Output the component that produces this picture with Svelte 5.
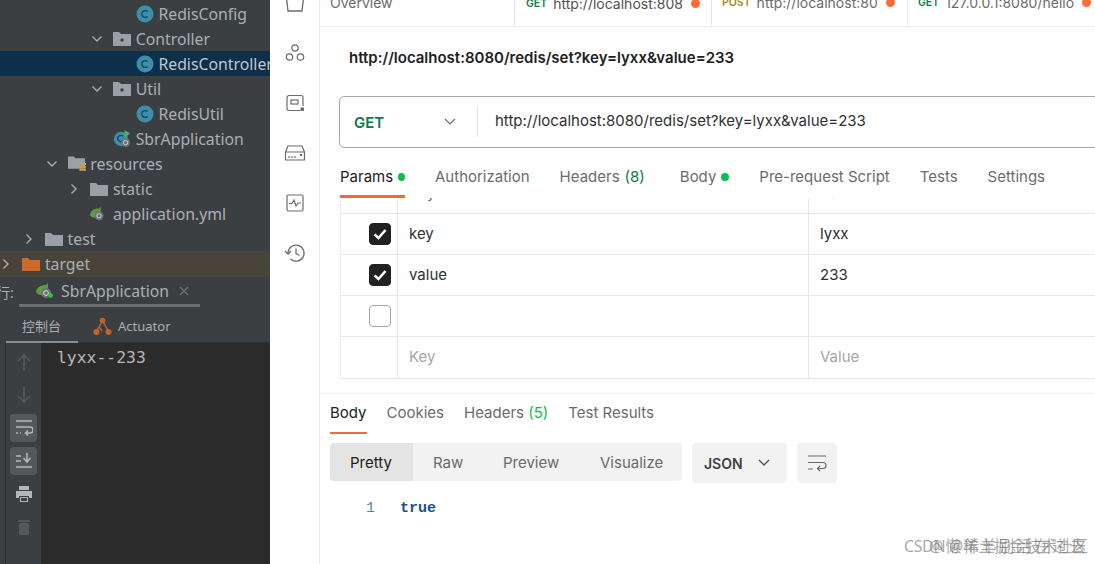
<script>
	const tree = [
		{ name: 'RedisConfig', depth: 4, icon: 'class' },
		{ name: 'Controller', depth: 3, icon: 'pkg', open: true },
		{ name: 'RedisController', depth: 4, icon: 'class', selected: true },
		{ name: 'Util', depth: 3, icon: 'pkg', open: true },
		{ name: 'RedisUtil', depth: 4, icon: 'class' },
		{ name: 'SbrApplication', depth: 3, icon: 'boot' },
		{ name: 'resources', depth: 1, icon: 'res', open: true },
		{ name: 'static', depth: 2, icon: 'folder', closed: true },
		{ name: 'application.yml', depth: 2, icon: 'yml' },
		{ name: 'test', depth: 0, icon: 'folder', closed: true },
		{ name: 'target', depth: -1, icon: 'target', closed: true, excluded: true }
	];

	const tabs = [
		{ method: 'GET', url: 'http://localhost:808', active: true, width: 197 },
		{ method: 'POST', url: 'http://localhost:80', width: 196 },
		{ method: 'GET', url: '127.0.0.1:8080/hello', width: 190 }
	];

	const requestTabs = [
		{ label: 'Params', dot: true, active: true },
		{ label: 'Authorization' },
		{ label: 'Headers', count: 8 },
		{ label: 'Body', dot: true },
		{ label: 'Pre-request Script' },
		{ label: 'Tests' },
		{ label: 'Settings' }
	];

	const params = [
		{ key: 'key', value: 'lyxx', checked: true },
		{ key: 'value', value: '233', checked: true },
		{ key: '', value: '', checked: false }
	];

	const url = 'http://localhost:8080/redis/set?key=lyxx&value=233';
</script>

{#snippet leaf(x)}
	<path d="M{x} 10c1-5 5-7 10-7l2-2v4c0 5-3 8-7 8-2 0-4-1-5-3z" fill="#5e9a48" />
	<circle cx={x + 10} cy="11" r="5" fill="#6e7174" />
	<circle cx={x + 10} cy="11" r="2.4" fill="none" stroke="#d8d8d8" stroke-width="1" />
{/snippet}

<div class="page">
	<section class="ide">
		<div class="tree">
			{#each tree as row}
				<div class="row" class:selected={row.selected} class:excluded={row.excluded} style="padding-left: {row.depth * 22.7 + 23}px">
					<span class="arrow">
						{#if row.open}
							<svg width="12" height="12" viewBox="0 0 12 12"><path d="M1.5 3.5 6 8l4.500-4.500" fill="none" stroke="#a8adb0" stroke-width="1.4" /></svg>
						{:else if row.closed}
							<svg width="12" height="12" viewBox="0 0 12 12"><path d="M3.5 1.5 8 6l-4.500 4.500" fill="none" stroke="#a8adb0" stroke-width="1.4" /></svg>
						{/if}
					</span>
					<span class="ficon">
						{#if row.icon === 'class'}
							<svg width="18" height="18" viewBox="0 0 18 18">
								<circle cx="9" cy="9" r="8.5" fill="#3a8fb0" />
								<path d="M11.6 6.6a3.4 3.4 0 1 0 0 4.8" fill="none" stroke="#2b3e48" stroke-width="1.4" />
							</svg>
						{:else if row.icon === 'pkg'}
							<svg width="18" height="16" viewBox="0 0 18 16">
								<path d="M0 1h6l2 2h10v12H0z" fill="#9aa0a6" />
								<circle cx="9" cy="9" r="1.7" fill="#3c3f41" />
							</svg>
						{:else if row.icon === 'folder'}
							<svg width="18" height="16" viewBox="0 0 18 16"><path d="M0 2h6l2 2h10v11H0z" fill="#9aa0a6" /></svg>
						{:else if row.icon === 'target'}
							<svg width="18" height="16" viewBox="0 0 18 16"><path d="M0 2h6l2 2h10v11H0z" fill="#cc6a2c" /></svg>
						{:else if row.icon === 'res'}
							<svg width="19" height="18" viewBox="0 0 19 18">
								<path d="M0 1h6l2 2h10v11H0z" fill="#9aa0a6" />
								<path d="M12 8h7v2h-7zm0 3h7v2h-7zm0 3h7v2h-7z" fill="#c9a23a" />
							</svg>
						{:else if row.icon === 'boot'}
							<svg width="20" height="20" viewBox="0 0 20 20">
								<circle cx="9" cy="10" r="8" fill="#3a8fb0" />
								<path d="M11 7a3.4 3.4 0 1 0 0 5" fill="none" stroke="#2b3e48" stroke-width="1.4" />
								<path d="M13 0l6 4-6 4z" fill="#5fae4e" />
								<circle cx="14" cy="14" r="5" fill="#6e7174" />
								<circle cx="14" cy="14" r="2.4" fill="none" stroke="#d8d8d8" />
							</svg>
						{:else if row.icon === 'yml'}
							<svg width="20" height="18" viewBox="0 0 20 18">
								{@render leaf(0)}
							</svg>
						{/if}
					</span>
					<span class="fname">{row.name}</span>
				</div>
			{/each}
		</div>

		<div class="runbar">
			<span class="runlabel">行:</span>
			<div class="runtab">
				<svg width="20" height="18" viewBox="0 0 20 18">
					{@render leaf(0)}
					<circle cx="14.5" cy="13.5" r="2.4" fill="#27c93f" />
				</svg>
				<span>SbrApplication</span>
				<svg class="close" width="10" height="10" viewBox="0 0 10 10"><path d="M1 1l8 8M9 1l-8 8" stroke="#6d7073" stroke-width="1.2" /></svg>
			</div>
		</div>

		<div class="consoletabs">
			<span class="ctab active">控制台</span>
			<span class="ctab">
				<svg width="19" height="19" viewBox="0 0 19 19">
					<path d="M3 15 9.500 4 16 15M3 15l3-5 3 4" fill="none" stroke="#c4622d" stroke-width="1.4" />
					<circle cx="3.500" cy="15" r="3" fill="#c4622d" />
					<circle cx="15.500" cy="15" r="3" fill="#c4622d" />
					<circle cx="9.500" cy="3.500" r="2.800" fill="#c4622d" />
				</svg>
				Actuator
			</span>
		</div>

		<div class="consolebody">
			<div class="tools">
				<span class="tool dim">
					<svg width="16" height="18" viewBox="0 0 16 18"><path d="M8 17V2M2 8l6-6 6 6" fill="none" stroke="#55585b" stroke-width="1.6" /></svg>
				</span>
				<span class="tool dim">
					<svg width="16" height="18" viewBox="0 0 16 18"><path d="M8 1v15M2 10l6 6 6-6" fill="none" stroke="#55585b" stroke-width="1.6" /></svg>
				</span>
				<span class="tool on">
					<svg width="18" height="18" viewBox="0 0 18 18"><path d="M1 2h16M1 8h14a2.500 2.500 0 0 1 0 6h-4M13 11.500 10.500 14l2.500 2.500M1 14h2M5 14h1" fill="none" stroke="#b3b6b8" stroke-width="1.6" /></svg>
				</span>
				<span class="tool on">
					<svg width="18" height="18" viewBox="0 0 18 18"><path d="M12 1v8M8.500 6 12 10l3.500-4M1 4h5M1 9h5M1 15h16" fill="none" stroke="#b3b6b8" stroke-width="1.6" /></svg>
				</span>
				<span class="tool">
					<svg width="18" height="18" viewBox="0 0 18 18"><path d="M4 1h10v4H4zM1 6h16v7h-3v-2H4v2H1zM5 12h8v5H5z" fill="#b3b6b8" /><path d="M6 13h6v3H6z" fill="#3c3f41" /></svg>
				</span>
				<span class="tool">
					<svg width="14" height="18" viewBox="0 0 14 18"><path d="M1 2h12v2H1zM2 5h10v12H2z" fill="#55585b" /></svg>
				</span>
			</div>
			<pre class="output">lyxx--233</pre>
		</div>
	</section>

	<aside class="rail">
		<svg class="railtop" width="20" height="20" viewBox="0 0 20 20"><path d="M1 1h18l-2 17H3z" fill="none" stroke="#6b6b6b" stroke-width="1.300" /></svg>
		<svg width="20" height="20" viewBox="0 0 20 20" fill="none" stroke="#6b6b6b" stroke-width="1.200">
			<circle cx="10" cy="5" r="3.200" /><circle cx="4.500" cy="14" r="3.200" /><circle cx="15.500" cy="14" r="3.200" />
		</svg>
		<svg width="20" height="20" viewBox="0 0 20 20" fill="none" stroke="#6b6b6b" stroke-width="1.200">
			<path d="M15 17.500H4a2 2 0 0 1-2-2v-11a2 2 0 0 1 2-2h12a2 2 0 0 1 2 2V13" />
			<rect x="6" y="7" width="7" height="4" />
			<rect x="15.500" y="14.500" width="3.500" height="3.500" fill="#6b6b6b" stroke="none" />
		</svg>
		<svg width="22" height="20" viewBox="0 0 22 20" fill="none" stroke="#6b6b6b" stroke-width="1.200">
			<path d="M1.500 9 4 3h14l2.500 6v8h-19zM1.500 9h19" />
			<path d="M5 13v2M8 13v2M11 13v2" /><circle cx="17" cy="12" r=".6" />
		</svg>
		<svg width="20" height="20" viewBox="0 0 20 20" fill="none" stroke="#6b6b6b" stroke-width="1.200">
			<rect x="2" y="2" width="16" height="16" rx="1.500" />
			<path d="M4 10.500h3l2-3.500 2 6 2-3h3" />
		</svg>
		<svg width="22" height="20" viewBox="0 0 22 20" fill="none" stroke="#6b6b6b" stroke-width="1.300">
			<path d="M4 10a8 8 0 1 1 2.500 6" />
			<path d="M1 8l3 3 3-3M12 5.500V10.500l3.500 2" />
		</svg>
	</aside>

	<main class="postman">
		<div class="tabbar">
			<div class="tab overview"><span class="tabtext">Overview</span></div>
			{#each tabs as tab}
				<div class="tab" class:active={tab.active} style="width: {tab.width}px">
					<span class="method" class:post={tab.method === 'POST'}>{tab.method}</span>
					<span class="tabtext">{tab.url}</span>
					<span class="unsaved"></span>
				</div>
			{/each}
		</div>

		<h1 class="title">{url}</h1>

		<div class="urlbar">
			<div class="verb">
				<span>GET</span>
				<svg width="12" height="8" viewBox="0 0 12 8"><path d="M1 1l5 5 5-5" fill="none" stroke="#6b6b6b" stroke-width="1.200" /></svg>
			</div>
			<div class="urltext">{url}</div>
		</div>

		<nav class="reqtabs">
			{#each requestTabs as tab}
				<span class="reqtab" class:active={tab.active}>
					{tab.label}
					{#if tab.count}<em>({tab.count})</em>{/if}
					{#if tab.dot}<i></i>{/if}
				</span>
			{/each}
		</nav>

		<div class="table">
			<div class="trow clipped">
				<div class="c1"></div>
				<div class="c2"><span class="ghost">Key</span></div>
				<div class="c3"><span class="ghost">Value</span></div>
			</div>
			{#each params as p}
				<div class="trow">
					<div class="c1">
						<span class="check" class:checked={p.checked}>
							{#if p.checked}
								<svg width="14" height="12" viewBox="0 0 14 12"><path d="M1.500 6.500 5.500 10l7-8" fill="none" stroke="#fff" stroke-width="2.600" /></svg>
							{/if}
						</span>
					</div>
					<div class="c2">{p.key}</div>
					<div class="c3">{p.value}</div>
				</div>
			{/each}
			<div class="trow">
				<div class="c1"></div>
				<div class="c2 ph">Key</div>
				<div class="c3 ph">Value</div>
			</div>
		</div>

		<div class="response">
			<nav class="restabs">
				<span class="restab active">Body</span>
				<span class="restab">Cookies</span>
				<span class="restab">Headers <em>(5)</em></span>
				<span class="restab">Test Results</span>
			</nav>

			<div class="viewbar">
				<div class="segments">
					<span class="seg active">Pretty</span>
					<span class="seg raw">Raw</span>
					<span class="seg preview">Preview</span>
					<span class="seg visualize">Visualize</span>
				</div>
				<div class="format">
					<span>JSON</span>
					<svg width="12" height="8" viewBox="0 0 12 8"><path d="M1 1l5 5 5-5" fill="none" stroke="#505050" stroke-width="1.300" /></svg>
				</div>
				<div class="wrap">
					<svg width="20" height="18" viewBox="0 0 20 18" fill="none" stroke="#6b6b6b" stroke-width="1.200">
						<path d="M1 2h18M1 8.500h15a3 3 0 0 1 0 6h-5M13 12l-2.500 2.500L13 17M1 15h5" />
					</svg>
				</div>
			</div>

			<div class="code">
				<span class="lineno">1</span>
				<span class="bool">true</span>
			</div>
		</div>
	</main>

	<div class="watermark">
		<span class="wm1">CSDN @稀土掘金技术社区</span>
		<span class="wm2">@懒羊羊别活在过去</span>
	</div>
</div>

<style>
	:global(body) {
		margin: 0;
		background: #fff;
	}

	.page {
		position: relative;
		display: flex;
		width: 1095px;
		height: 564px;
		overflow: hidden;
		font-family: Inter, 'Liberation Sans', sans-serif;
	}

	/* ide side */
	.ide {
		width: 270px;
		flex: none;
		display: flex;
		flex-direction: column;
		background: #3c3f41;
		font-family: 'Noto Sans', 'Noto Sans CJK SC', sans-serif;
		color: #a9b0b5;
	}

	.tree {
		padding-top: 1px;
		height: 277px;
		box-sizing: border-box;
		flex: none;
		overflow: hidden;
	}

	.row {
		display: flex;
		align-items: center;
		height: 25px;
		font-size: 15.8px;
		white-space: nowrap;
		overflow: hidden;
		box-sizing: border-box;
	}

	.row.selected {
		background: #0d2f4a;
		color: #c0c6ca;
	}

	.row.excluded {
		background: #48443a;
		height: 26px;
	}

	.arrow {
		width: 12px;
		height: 12px;
		margin-right: 10px;
		flex: none;
		display: flex;
	}

	.ficon {
		width: 18px;
		flex: none;
		margin-right: 4.6px;
		display: flex;
		align-items: center;
	}

	.runbar {
		height: 30px;
		flex: none;
		display: flex;
		align-items: center;
		background: #3c3f41;
		font-size: 15.8px;
	}

	.runlabel {
		margin-left: -4px;
		width: 23px;
		font-size: 14px;
	}

	.runtab {
		display: flex;
		align-items: center;
		gap: 5px;
		width: 181px;
		height: 30px;
		box-sizing: border-box;
		padding-left: 17px;
		border-bottom: 3px solid #6c6f72;
		flex: none;
	}

	.close {
		margin-left: 5px;
	}

	.consoletabs {
		height: 36px;
		box-sizing: border-box;
		flex: none;
		display: flex;
		align-items: center;
		margin-left: 6px;
		border-bottom: 1px solid #323232;
		font-size: 13px;
	}

	.ctab {
		display: flex;
		align-items: center;
		gap: 6px;
		height: 36px;
		box-sizing: border-box;
		padding-top: 3px;
	}

	.ctab.active {
		width: 72px;
		padding-left: 16px;
		border-bottom: 2px solid #8a8d90;
		margin-right: 15px;
	}

	.consolebody {
		flex: 1;
		display: flex;
		margin-left: 5px;
		border-left: 1px solid #2d2d2d;
		min-height: 0;
	}

	.tools {
		width: 35px;
		flex: none;
		display: flex;
		flex-direction: column;
		align-items: center;
		gap: 5px;
		padding-top: 5px;
		box-sizing: border-box;
	}

	.tool {
		width: 27px;
		height: 28px;
		border-radius: 4px;
		display: flex;
		align-items: center;
		justify-content: center;
	}

	.tool.on {
		background: #55585b;
	}

	.output {
		flex: 1;
		margin: 0;
		padding: 5px 0 0 16px;
		background: #2b2b2b;
		color: #b4b8ba;
		font-family: 'DejaVu Sans Mono', monospace;
		font-size: 16.4px;
		line-height: 20px;
	}

	/* postman rail */
	.rail {
		width: 50px;
		flex: none;
		box-sizing: border-box;
		border-right: 1px solid #ededed;
		display: flex;
		flex-direction: column;
		align-items: center;
		gap: 30px;
		margin-top: -7px;
	}

	/* postman main */
	.postman {
		flex: 1;
		min-width: 0;
		display: flex;
		flex-direction: column;
		color: #212121;
		overflow: hidden;
	}

	.tabbar {
		height: 27px;
		flex: none;
		display: flex;
		align-items: flex-end;
		overflow: hidden;
		border-bottom: 1px solid #ededed;
		box-sizing: border-box;
		font-size: 14px;
	}

	.tab {
		height: 26px;
		flex: none;
		display: flex;
		align-items: flex-end;
		gap: 6px;
		box-sizing: border-box;
		padding: 0 0 16px 10px;
		line-height: 17px;
		border-right: 1px solid #ededed;
		color: #6b6b6b;
		white-space: nowrap;
	}

	.tab.overview {
		width: 195px;
		border-right: 1px solid #e4e4e4;
	}

	.tab.active {
		height: 27px;
		margin-bottom: -1px;
		background: #fff;
		color: #505050;
		position: relative;
		border-right: 1px solid #e4e4e4;
		padding-left: 11px;
	}

	.tabtext {
		position: relative;
		top: 1px;
	}

	.method {
		position: relative;
		top: 1px;
		font-size: 10.5px;
		font-weight: 600;
		color: #0b7a47;
	}

	.method.post {
		color: #a8891a;
	}

	.unsaved {
		position: relative;
		top: -3px;
		width: 9px;
		height: 9px;
		border-radius: 50%;
		background: #ff6c37;
		margin-left: 2px;
	}

	.title {
		margin: 0;
		padding: 22px 0 0 29px;
		height: 69px;
		box-sizing: border-box;
		font-size: 15px;
		font-weight: 600;
		line-height: 18px;
		color: #212121;
		white-space: nowrap;
		flex: none;
	}

	.urlbar {
		margin-left: 19px;
		width: 800px;
		height: 52px;
		box-sizing: border-box;
		flex: none;
		border: 1px solid #a6a6a6;
		border-radius: 5px;
		display: flex;
		align-items: center;
	}

	.verb {
		width: 138px;
		height: 30px;
		box-sizing: border-box;
		padding: 0 21px 0 14px;
		display: flex;
		align-items: center;
		justify-content: space-between;
		border-right: 1px solid #e4e4e4;
		font-size: 15px;
		font-weight: 600;
		color: #0b7a47;
		flex: none;
	}

	.urltext {
		padding: 0 0 4px 17px;
		font-size: 15px;
		color: #303030;
		white-space: nowrap;
	}

	.reqtabs {
		display: flex;
		flex: none;
		height: 50px;
		margin-left: 20px;
		box-sizing: border-box;
		padding-top: 20px;
		gap: 30px;
		font-size: 15px;
		color: #6b6b6b;
	}

	.reqtab {
		display: flex;
		align-items: flex-start;
		gap: 5px;
		height: 30px;
		line-height: 18px;
		box-sizing: border-box;
		white-space: nowrap;
	}

	.reqtab.active {
		color: #212121;
		border-bottom: 3px solid #f26b3a;
		width: 65px;
	}

	.reqtab em {
		font-style: normal;
		color: #0b7a47;
		margin-right: 5px;
	}

	.reqtab i {
		width: 8px;
		height: 8px;
		border-radius: 50%;
		background: #0cbb52;
		margin-top: 5px;
	}

	.table {
		margin-left: 20px;
		flex: none;
		width: 800px;
		border-bottom: 1px solid #e8e8e8;
		border-left: 1px solid #ededed;
		font-size: 15px;
		color: #303030;
	}

	.trow {
		display: flex;
		height: 41px;
		box-sizing: border-box;
		border-bottom: 1px solid #e8e8e8;
	}

	.trow:last-child {
		border-bottom: 0;
	}

	.trow.clipped {
		height: 16px;
		overflow: hidden;
	}

	.ghost {
		position: relative;
		top: -12px;
		color: #6b6b6b;
	}

	.c1 {
		width: 57px;
		flex: none;
		box-sizing: border-box;
		border-right: 1px solid #e8e8e8;
		display: flex;
		align-items: center;
		padding-left: 28px;
	}

	.c2 {
		width: 411px;
		flex: none;
		box-sizing: border-box;
		border-right: 1px solid #e8e8e8;
		padding: 0 11px 2px;
		display: flex;
		align-items: center;
	}

	.c3 {
		padding: 0 11px 2px;
		flex: 1;
		display: flex;
		align-items: center;
	}

	.ph {
		color: #a6a6a6;
	}

	.check {
		width: 22px;
		height: 22px;
		box-sizing: border-box;
		border-radius: 4px;
		border: 1px solid #a6a6a6;
		display: flex;
		align-items: center;
		justify-content: center;
	}

	.check.checked {
		background: #212121;
		border-color: #212121;
	}

	.response {
		margin-top: 14px;
		border-top: 1px solid #ededed;
		padding-left: 10px;
		flex: 1;
	}

	.restabs {
		display: flex;
		gap: 20px;
		height: 40px;
		box-sizing: border-box;
		padding-top: 10px;
		font-size: 15px;
		color: #6b6b6b;
	}

	.restab {
		height: 30px;
		line-height: 18px;
		box-sizing: border-box;
		white-space: nowrap;
	}

	.restab.active {
		color: #212121;
		border-bottom: 2px solid #f26b3a;
	}

	.restab em {
		font-style: normal;
		color: #0cbb52;
	}

	.viewbar {
		display: flex;
		align-items: flex-start;
		gap: 10px;
		margin-top: 9px;
	}

	.segments {
		display: flex;
		width: 352px;
		height: 38px;
		border-radius: 4px;
		background: #f2f2f2;
		font-size: 15px;
		color: #6b6b6b;
		overflow: hidden;
	}

	.seg {
		display: flex;
		align-items: center;
		box-sizing: border-box;
	}

	.seg.active {
		width: 83px;
		padding-left: 20px;
		background: #e4e4e4;
		color: #212121;
	}

	.seg.raw {
		width: 70px;
		padding-left: 20px;
	}

	.seg.preview {
		width: 97px;
		padding-left: 20px;
	}

	.seg.visualize {
		padding-left: 20px;
	}

	.format {
		width: 95px;
		height: 40px;
		box-sizing: border-box;
		padding: 0 17px 0 12px;
		border-radius: 4px;
		background: #f2f2f2;
		display: flex;
		align-items: center;
		justify-content: space-between;
		font-size: 14px;
		font-weight: 600;
		color: #404040;
	}

	.wrap {
		width: 40px;
		height: 40px;
		border-radius: 4px;
		background: #f2f2f2;
		display: flex;
		align-items: center;
		justify-content: center;
	}

	.code {
		display: flex;
		align-items: center;
		margin-top: 15px;
		height: 20px;
		font-family: 'Liberation Mono', monospace;
		font-size: 15px;
	}

	.lineno {
		width: 70px;
		box-sizing: border-box;
		padding-left: 36px;
		color: #4f8a9c;
	}

	.bool {
		color: #1c4f94;
		font-weight: 700;
	}

	.watermark {
		position: absolute;
		right: 7px;
		bottom: 8px;
		width: 184px;
		height: 20px;
		font-family: 'Noto Sans', 'Noto Sans CJK SC', sans-serif;
		font-size: 16px;
		line-height: 20px;
		color: rgba(110, 110, 110, 0.6);
		white-space: nowrap;
	}

	.wm1,
	.wm2 {
		position: absolute;
		top: 0;
	}

	.wm1 {
		left: 0;
		letter-spacing: -0.4px;
	}

	.wm2 {
		left: 25px;
		letter-spacing: 1.800px;
	}
</style>
